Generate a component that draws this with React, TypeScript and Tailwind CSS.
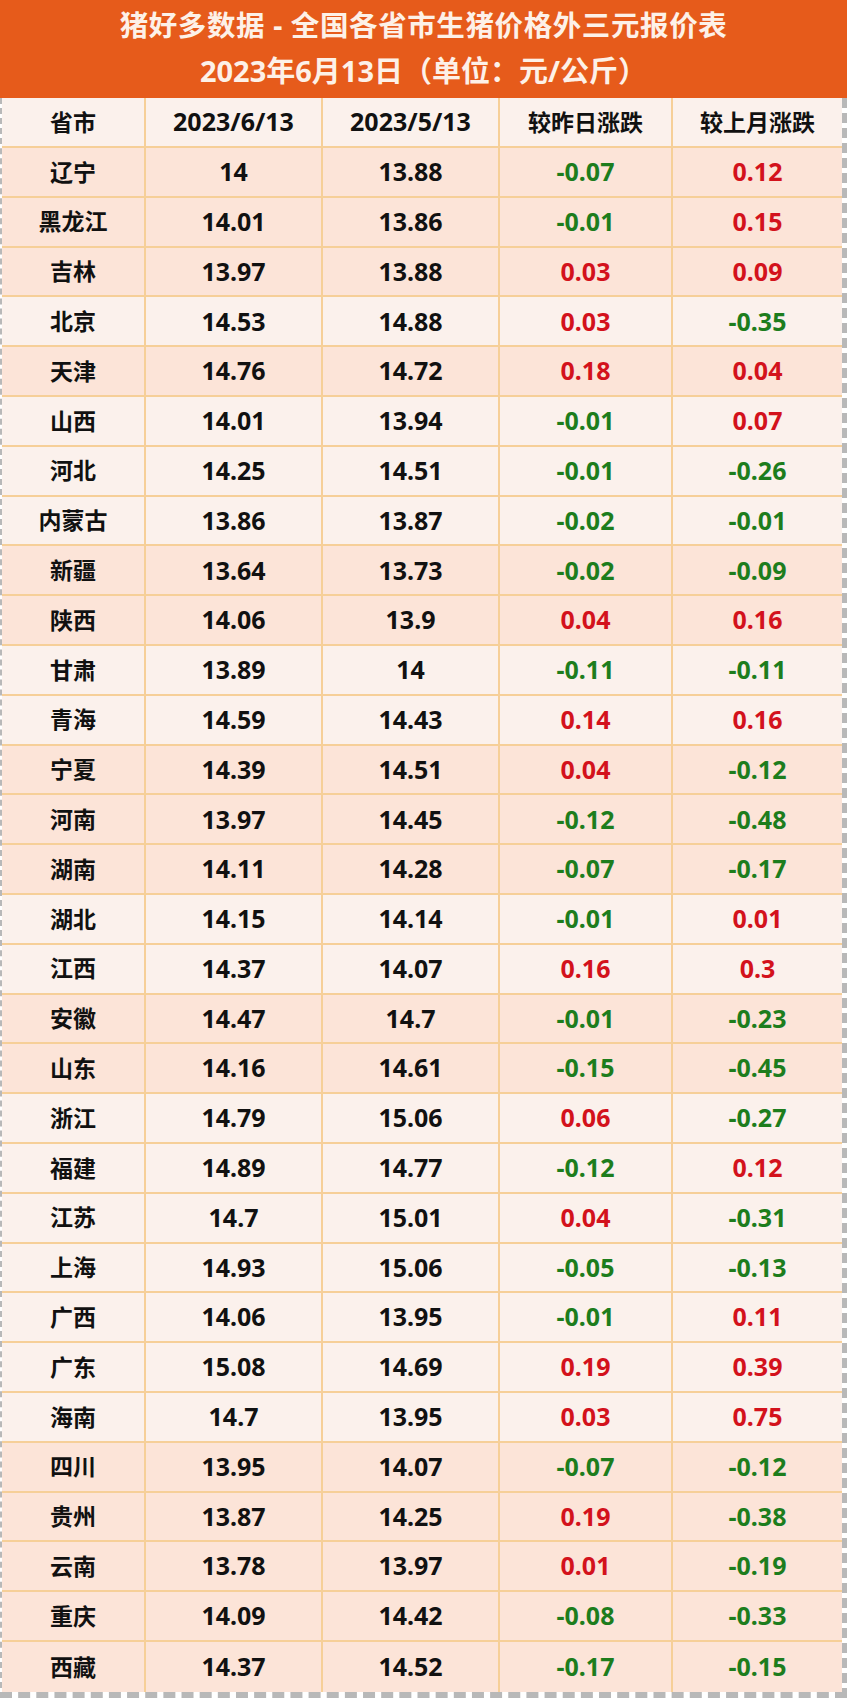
import React from "react";

type Row = { name: string; today: string; lastMonth: string; dayDiff: string; monthDiff: string; light?: boolean };

const rows: Row[] = [
  { name: "辽宁", today: "14", lastMonth: "13.88", dayDiff: "-0.07", monthDiff: "0.12" },
  { name: "黑龙江", today: "14.01", lastMonth: "13.86", dayDiff: "-0.01", monthDiff: "0.15" },
  { name: "吉林", today: "13.97", lastMonth: "13.88", dayDiff: "0.03", monthDiff: "0.09" },
  { name: "北京", today: "14.53", lastMonth: "14.88", dayDiff: "0.03", monthDiff: "-0.35", light: true },
  { name: "天津", today: "14.76", lastMonth: "14.72", dayDiff: "0.18", monthDiff: "0.04" },
  { name: "山西", today: "14.01", lastMonth: "13.94", dayDiff: "-0.01", monthDiff: "0.07", light: true },
  { name: "河北", today: "14.25", lastMonth: "14.51", dayDiff: "-0.01", monthDiff: "-0.26", light: true },
  { name: "内蒙古", today: "13.86", lastMonth: "13.87", dayDiff: "-0.02", monthDiff: "-0.01", light: true },
  { name: "新疆", today: "13.64", lastMonth: "13.73", dayDiff: "-0.02", monthDiff: "-0.09" },
  { name: "陕西", today: "14.06", lastMonth: "13.9", dayDiff: "0.04", monthDiff: "0.16" },
  { name: "甘肃", today: "13.89", lastMonth: "14", dayDiff: "-0.11", monthDiff: "-0.11", light: true },
  { name: "青海", today: "14.59", lastMonth: "14.43", dayDiff: "0.14", monthDiff: "0.16", light: true },
  { name: "宁夏", today: "14.39", lastMonth: "14.51", dayDiff: "0.04", monthDiff: "-0.12" },
  { name: "河南", today: "13.97", lastMonth: "14.45", dayDiff: "-0.12", monthDiff: "-0.48" },
  { name: "湖南", today: "14.11", lastMonth: "14.28", dayDiff: "-0.07", monthDiff: "-0.17" },
  { name: "湖北", today: "14.15", lastMonth: "14.14", dayDiff: "-0.01", monthDiff: "0.01", light: true },
  { name: "江西", today: "14.37", lastMonth: "14.07", dayDiff: "0.16", monthDiff: "0.3", light: true },
  { name: "安徽", today: "14.47", lastMonth: "14.7", dayDiff: "-0.01", monthDiff: "-0.23" },
  { name: "山东", today: "14.16", lastMonth: "14.61", dayDiff: "-0.15", monthDiff: "-0.45" },
  { name: "浙江", today: "14.79", lastMonth: "15.06", dayDiff: "0.06", monthDiff: "-0.27", light: true },
  { name: "福建", today: "14.89", lastMonth: "14.77", dayDiff: "-0.12", monthDiff: "0.12", light: true },
  { name: "江苏", today: "14.7", lastMonth: "15.01", dayDiff: "0.04", monthDiff: "-0.31", light: true },
  { name: "上海", today: "14.93", lastMonth: "15.06", dayDiff: "-0.05", monthDiff: "-0.13", light: true },
  { name: "广西", today: "14.06", lastMonth: "13.95", dayDiff: "-0.01", monthDiff: "0.11", light: true },
  { name: "广东", today: "15.08", lastMonth: "14.69", dayDiff: "0.19", monthDiff: "0.39", light: true },
  { name: "海南", today: "14.7", lastMonth: "13.95", dayDiff: "0.03", monthDiff: "0.75", light: true },
  { name: "四川", today: "13.95", lastMonth: "14.07", dayDiff: "-0.07", monthDiff: "-0.12" },
  { name: "贵州", today: "13.87", lastMonth: "14.25", dayDiff: "0.19", monthDiff: "-0.38" },
  { name: "云南", today: "13.78", lastMonth: "13.97", dayDiff: "0.01", monthDiff: "-0.19" },
  { name: "重庆", today: "14.09", lastMonth: "14.42", dayDiff: "-0.08", monthDiff: "-0.33" },
  { name: "西藏", today: "14.37", lastMonth: "14.52", dayDiff: "-0.17", monthDiff: "-0.15" },
];

const font = { fontFamily: '"Noto Sans", "Noto Sans CJK SC", sans-serif' };

function diffColor(v: string) {
  return v.startsWith("-") ? "text-[#1d7d1d]" : "text-[#d3121c]";
}

function Cell({ children, className = "", last = false }: { children: React.ReactNode; className?: string; last?: boolean }) {
  return (
    <div className={`flex items-center justify-center ${last ? "" : "border-r-2 border-[#f6cf98]"} ${className}`}>
      {children}
    </div>
  );
}

const cols = "grid grid-cols-[144px_177px_177px_173px_1fr]";

export default function App() {
  return (
    <div className="w-[847px] bg-white font-bold" style={font}>
      {/* Title */}
      <div className="h-[98px] bg-[#e65b1b] text-[#fdf1e8] flex flex-col items-center justify-center gap-[6px] pb-[2px]">
        <div className="text-[28.5px] leading-[40px] tracking-[0.6px]">猪好多数据 - 全国各省市生猪价格外三元报价表</div>
        <div className="text-[29px] leading-[40px]">2023年6月13日（单位：元/公斤）</div>
      </div>

      <div className="border-l-2 border-r-[5px] border-b-[6px] border-dashed border-[#b8b8b8]">
        {/* Header row */}
        <div className={`${cols} h-[50px] bg-[#fbf1ec] border-b-2 border-[#f6cf98] text-[23px] text-[#111]`}>
          <Cell>省市</Cell>
          <Cell className="text-[25px]">2023/6/13</Cell>
          <Cell className="text-[25px]">2023/5/13</Cell>
          <Cell>较昨日涨跌</Cell>
          <Cell last>较上月涨跌</Cell>
        </div>

        {rows.map((r, i) => (
          <div
            key={r.name}
            className={`${cols} h-[49.8px] ${r.light ? "bg-[#fbf1ec]" : "bg-[#fce4d8]"} ${i === rows.length - 1 ? "" : "border-b-2 border-[#f6cf98]"} text-[25px]`}
          >
            <Cell className="text-[23px] text-[#111]">{r.name}</Cell>
            <Cell className="text-[#111]">{r.today}</Cell>
            <Cell className="text-[#111]">{r.lastMonth}</Cell>
            <Cell className={diffColor(r.dayDiff)}>{r.dayDiff}</Cell>
            <Cell last className={diffColor(r.monthDiff)}>{r.monthDiff}</Cell>
          </div>
        ))}
      </div>
    </div>
  );
}
